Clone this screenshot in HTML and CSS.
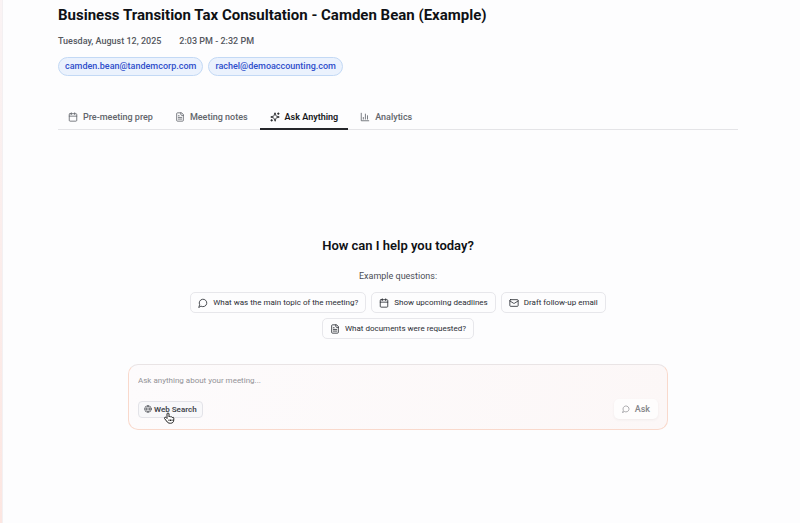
FILE: index.html
```html
<!doctype html>
<html lang="en">
  <head>
    <meta charset="UTF-8">
    <title>Business Transition Tax Consultation</title>
    <meta name="viewport" content="width=device-width, initial-scale=1">
    <link rel="stylesheet" href="styles.css">
  </head>
  <body>
<svg class="sprite">
  <symbol id="calendar" viewBox="0 0 24 24"><rect x="3" y="4" width="18" height="18" rx="2"/><path d="M8 2v4M16 2v4M3 10h18"/></symbol>
  <symbol id="file" viewBox="0 0 24 24"><path d="M15 2H6a2 2 0 0 0-2 2v16a2 2 0 0 0 2 2h12a2 2 0 0 0 2-2V7Z"/><path d="M14 2v4a2 2 0 0 0 2 2h4M10 9H8M16 13H8M16 17H8"/></symbol>
  <symbol id="sparkles" viewBox="0 0 24 24"><path d="M9.9 15.5A2 2 0 0 0 8.500 14.100l-6.100-1.600a.5.5 0 0 1 0-1L8.500 9.900A2 2 0 0 0 9.900 8.500l1.600-6.100a.5.5 0 0 1 1 0l1.600 6.100a2 2 0 0 0 1.400 1.400l6.100 1.600a.5.5 0 0 1 0 1l-6.100 1.600a2 2 0 0 0-1.400 1.400l-1.600 6.100a.5.5 0 0 1-1 0z"/><path d="M20 2v4M22 4h-4M4 18v4M6 20H2"/></symbol>
  <symbol id="chart" viewBox="0 0 24 24"><path d="M3 3v18h18M8 17v-4M13 17V5M18 17V9"/></symbol>
  <symbol id="message" viewBox="0 0 24 24"><path d="M7.900 20A9 9 0 1 0 4 16.100L2 22Z"/></symbol>
  <symbol id="mail" viewBox="0 0 24 24"><rect x="2" y="4" width="20" height="16" rx="2"/><path d="m22 7-9 5.700a2 2 0 0 1-2 0L2 7"/></symbol>
  <symbol id="globe" viewBox="0 0 24 24"><circle cx="12" cy="12" r="10"/><path d="M12 2a15 15 0 0 0 0 20 15 15 0 0 0 0-20M2 12h20"/></symbol>
</svg>
<main>
  <header>
    <h1>Business Transition Tax Consultation - Camden Bean (Example)</h1>
    <div class="when">
      <span>Tuesday, August 12, 2025</span>
      <span>2:03 PM - 2:32 PM</span>
    </div>
    <div class="people">
      <span class="chip">camden.bean@tandemcorp.com</span>
      <span class="chip">rachel@demoaccounting.com</span>
    </div>
  </header>
  <nav class="tabs">
    <button class="tab"><svg class="icon"><use href="#calendar"/></svg>Pre-meeting prep</button>
    <button class="tab"><svg class="icon"><use href="#file"/></svg>Meeting notes</button>
    <button class="tab active"><svg class="icon"><use href="#sparkles"/></svg>Ask Anything</button>
    <button class="tab"><svg class="icon"><use href="#chart"/></svg>Analytics</button>
  </nav>
  <section class="chat">
    <h2>How can I help you today?</h2>
    <p>Example questions:</p>
    <div class="examples">
      <button class="example"><svg class="icon"><use href="#message"/></svg>What was the main topic of the meeting?</button>
      <button class="example"><svg class="icon"><use href="#calendar"/></svg>Show upcoming deadlines</button>
      <button class="example"><svg class="icon"><use href="#mail"/></svg>Draft follow-up email</button>
      <button class="example"><svg class="icon"><use href="#file"/></svg>What documents were requested?</button>
    </div>
    <form class="composer">
      <textarea rows="1" aria-label="Question" placeholder="Ask anything about your meeting..."></textarea>
      <div class="actions">
        <button type="button" class="search">
          <svg class="icon small"><use href="#globe"/></svg>Web Search
          <svg class="cursor" viewBox="0 0 24 24"><path d="M8 13V4a2 2 0 0 1 4 0v6a2 2 0 0 1 3.500 0 2 2 0 0 1 3 1 2 2 0 0 1 3 1.500V16c0 4-2.500 6.500-6.500 6.500-4.500 0-6-1.500-8-4.500l-4-5c-1-2 1.500-3.500 3-2z"/><path d="M12 15v3M15 15v3M18 15v3"/></svg>
        </button>
        <button type="button" class="ask"><svg class="icon small"><use href="#message"/></svg>Ask</button>
      </div>
    </form>
  </section>
</main>
  </body>
</html>
```
FILE: styles.css
```css
* {
  box-sizing: border-box;
}
body {
  margin: 0;
  padding-left: 2px;
  background: linear-gradient(#faf3f4, #fce6e1);
  color: #0f1115;
  font-family: Roboto, sans-serif;
  font-size: 9px;
}
h1, h2, p {
  margin: 0;
}
button {
  display: flex;
  align-items: center;
  border: 0;
  background: none;
  color: inherit;
  font: inherit;
  white-space: nowrap;
}
.sprite {
  display: none;
}
.icon {
  width: 10px;
  height: 10px;
  flex: none;
  fill: none;
  stroke: currentColor;
  stroke-width: 2;
  stroke-linecap: round;
  stroke-linejoin: round;
}
.icon.small {
  width: 8px;
  height: 8px;
}
main {
  min-height: 100vh;
  border-left: 1px solid #f3f0f2;
  background: #fdfdfe;
  padding: 5px 62px 0 55px;
}
h1 {
  font-size: 15px;
  line-height: 20px;
  font-weight: 700;
}
.when {
  display: flex;
  gap: 18px;
  margin-top: 10px;
  color: #55585e;
  line-height: 12px;
  font-weight: 500;
}
.people {
  display: flex;
  gap: 5px;
  margin-top: 10px;
}
.chip {
  padding: 0 6px;
  border: 1px solid #c3d9f5;
  border-radius: 10px;
  background: #ebf2fd;
  color: #2f4fcb;
  line-height: 17px;
  font-weight: 500;
}
.tabs {
  display: flex;
  gap: 2px;
  margin-top: 28px;
  border-bottom: 1px solid #e4e4e7;
}
.tab {
  gap: 5px;
  height: 26px;
  margin-bottom: -1px;
  padding: 2px 10px 0;
  border-bottom: 2px solid transparent;
  color: #62656b;
  font-weight: 500;
}
.tab.active {
  border-color: #25262a;
  color: #16171a;
  font-weight: 600;
}
.chat {
  display: flex;
  flex-direction: column;
  align-items: center;
  margin-top: 107px;
}
h2 {
  font-size: 13px;
  line-height: 18px;
  font-weight: 600;
}
p {
  margin-top: 15px;
  color: #4b4e55;
  line-height: 12px;
}
.examples {
  display: flex;
  flex-wrap: wrap;
  justify-content: center;
  gap: 5px;
  width: 66%;
  margin-top: 10px;
}
.example {
  gap: 5px;
  height: 21px;
  padding: 0 7px;
  border: 1px solid #e7e7eb;
  border-radius: 5px;
  color: #292c33;
  font-size: 8px;
}
.composer {
  width: 540px;
  max-width: 100%;
  margin-top: 25px;
  padding: 10px 9px;
  border: 1px solid #f9d9cc;
  border-top-color: #e9e4e5;
  border-radius: 10px;
  background: linear-gradient(100deg, #fdfbfc, #fcf7f7);
}
textarea {
  display: block;
  width: 100%;
  padding: 0;
  border: 0;
  outline: 0;
  background: none;
  resize: none;
  font: 8px/12px Roboto, sans-serif;
}
textarea::placeholder {
  color: #939297;
}
.actions {
  display: flex;
  align-items: center;
  justify-content: space-between;
  margin-top: 12px;
}
.search {
  position: relative;
  gap: 2px;
  height: 17px;
  padding: 0 5px;
  border: 1px solid #e3e3e8;
  border-radius: 4px;
  background: #f8f8fa;
  color: #42454c;
  font-size: 8px;
  font-weight: 600;
}
.cursor {
  position: absolute;
  top: 10px;
  left: 24px;
  width: 12px;
  height: 12px;
  fill: #fff;
  stroke: #222;
  stroke-width: 2;
}
.ask {
  gap: 5px;
  height: 20px;
  padding: 0 8px;
  border-radius: 5px;
  background: #fefdfd;
  box-shadow: 0 1px 3px #0000000d;
  color: #85858a;
  font-weight: 500;
}
```
